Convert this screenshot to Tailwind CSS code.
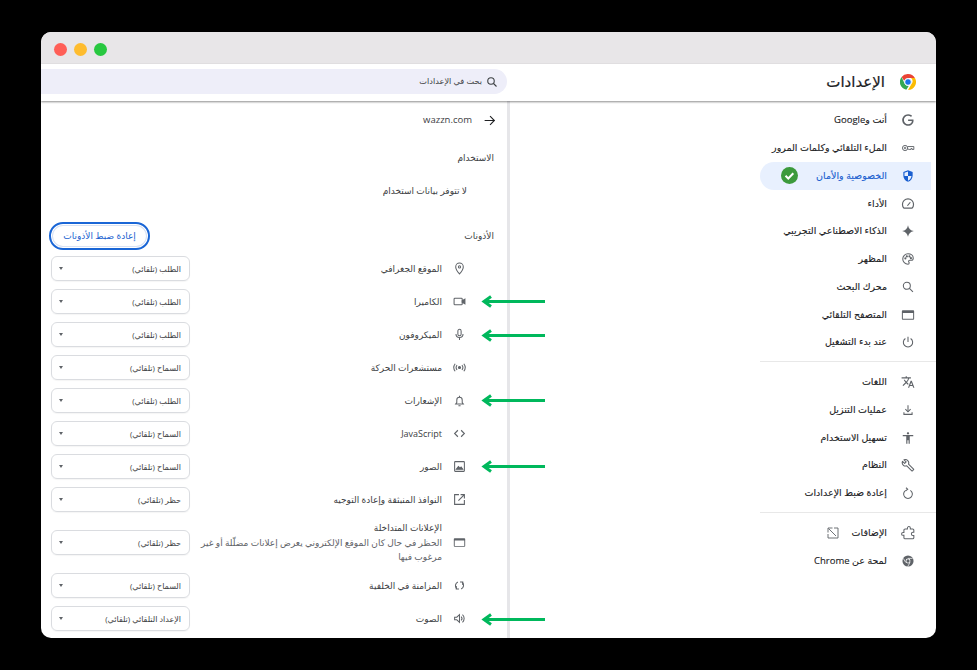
<!DOCTYPE html>
<html lang="ar" dir="rtl">
<head>
  <meta charset="UTF-8">
  <title>الإعدادات</title>
  <script src="https://cdn.jsdelivr.net/npm/@tailwindcss/browser@4"></script>
</head>
<body class="bg-black h-screen overflow-hidden font-['Open_Sans','DejaVu_Sans',sans-serif]">
  <!-- Window -->
  <div class="relative mt-[32px] mr-[41px] w-[895px] h-[606px] bg-white rounded-[10px] overflow-hidden flex flex-col">

    <!-- Title bar -->
    <div dir="ltr" class="h-[32px] shrink-0 bg-[#e8e6e8] flex items-center gap-[7px] pl-[13px] pt-[2px]">
      <span class="w-[13px] h-[13px] rounded-full bg-[#ff5f57]"></span>
      <span class="w-[13px] h-[13px] rounded-full bg-[#febc2e]"></span>
      <span class="w-[13px] h-[13px] rounded-full bg-[#28c840]"></span>
    </div>

    <!-- Toolbar -->
    <div class="relative z-10 h-[37px] shrink-0 bg-white flex items-center pb-[2px] shadow-[0_1px_2px_rgba(0,0,0,0.45)]">
      <div class="w-[429px] shrink-0 flex items-center gap-[15px] pr-[20px]">
        <svg class="w-[16px] h-[16px]" viewBox="0 0 24 24">
          <path fill="#ea4335" d="M12 0a12 12 0 0 1 10.4 6H12a6 6 0 0 0-5.7 4L2.4 4.5A12 12 0 0 1 12 0z"/>
          <path fill="#fbbc04" d="M22.4 6A12 12 0 0 1 12 24l5.2-9a6 6 0 0 0-.7-9z"/>
          <path fill="#34a853" d="M2.4 4.5 7.2 15a6 6 0 0 0 5.8 2.9L9.5 23.7A12 12 0 0 1 2.4 4.5z"/>
          <circle cx="12" cy="12" r="5" fill="#1a73e8" stroke="#fff" stroke-width="1.4"/>
        </svg>
        <h1 class="text-[15px] leading-none text-[#202124] font-medium [-webkit-text-stroke-width:0.2px]">الإعدادات</h1>
      </div>
      <div class="flex-1 h-[25px] bg-[#eeeef9] rounded-r-full flex items-center gap-[4px] pr-[9px] text-[8.2px] text-[#3c4043]">
        <svg class="w-[12px] h-[12px]" viewBox="0 0 24 24" fill="none" stroke="#3c4043" stroke-width="2.2"><circle cx="10" cy="10" r="6.5"/><path d="m15 15 6 6"/></svg>
        <span>بحث في الإعدادات</span>
      </div>
    </div>

    <!-- Body -->
    <div class="flex-1 flex min-h-0">

      <!-- Sidebar -->
      <aside class="w-[426px] shrink-0 pt-[5.5px] text-[9.5px] text-[#202124] [-webkit-text-stroke-width:0.12px]">
        <nav class="w-[176px]">
          <a class="h-[27.75px] flex items-center gap-[14px] pr-[21px]">
            <svg class="w-[14px] h-[14px] shrink-0" viewBox="0 0 24 24" fill="#5f6368"><path d="M21.35 11.1h-9.17v2.73h6.51c-.33 3.81-3.5 5.44-6.5 5.44C8.36 19.27 5 16.25 5 12c0-4.1 3.2-7.27 7.2-7.27 3.09 0 4.9 1.97 4.9 1.97L19 4.72S16.56 2 12.1 2C6.42 2 2.03 6.8 2.03 12c0 5.05 4.13 10 10.22 10 5.35 0 9.25-3.67 9.25-9.09 0-1.15-.15-1.81-.15-1.81z"/></svg>
            <span>أنت وGoogle</span>
          </a>
          <a class="h-[27.75px] flex items-center gap-[14px] pr-[21px]">
            <svg class="w-[14px] h-[14px] shrink-0" viewBox="0 0 24 24" fill="none" stroke="#5f6368" stroke-width="1.6"><circle cx="7" cy="12" r="4.5"/><circle cx="7" cy="12" r="1.4"/><path d="M11.5 9.5H22v5h-3v-1.5h-2v1.5h-3l-2.5-1"/></svg>
            <span>الملء التلقائي وكلمات المرور</span>
          </a>
          <a class="h-[27.75px] mr-[5px] w-[171px] bg-[#e8f0fe] rounded-l-full flex items-center gap-[14px] pr-[16px] text-[#1a5fd0]">
            <svg class="w-[14px] h-[14px] shrink-0" viewBox="0 0 24 24" fill="#1a5fd0"><path d="M12 2 4 5v6c0 5 3.4 9.6 8 11 4.6-1.400 8-6 8-11V5l-8-3zm0 2.200V12H6V6.400l6-2.200zM12 12h6c-.5 3.800-3 7.100-6 8v-8z"/></svg>
            <span class="flex-1">الخصوصية والأمان</span>
            <svg class="w-[17px] h-[17px] shrink-0 ml-[21px]" viewBox="0 0 17 17"><circle cx="8.500" cy="8.500" r="8.500" fill="#3c9a3c"/><path d="m4.500 8.700 2.800 2.800 5-5.200" fill="none" stroke="#fff" stroke-width="2"/></svg>
          </a>
          <a class="h-[27.75px] flex items-center gap-[14px] pr-[21px]">
            <svg class="w-[14px] h-[14px] shrink-0" viewBox="0 0 24 24" fill="none" stroke="#5f6368" stroke-width="2"><path d="M5 19a9.500 9.500 0 1 1 14 0z"/><path d="m11 15 5-6"/></svg>
            <span>الأداء</span>
          </a>
          <a class="h-[27.75px] flex items-center gap-[14px] pr-[21px]">
            <svg class="w-[14px] h-[14px] shrink-0" viewBox="0 0 24 24" fill="#5f6368"><path d="M12 2c.8 5.500 4.500 9.200 10 10-5.500.8-9.200 4.500-10 10-.8-5.500-4.500-9.200-10-10 5.500-.8 9.200-4.500 10-10z"/></svg>
            <span>الذكاء الاصطناعي التجريبي</span>
          </a>
          <a class="h-[27.75px] flex items-center gap-[14px] pr-[21px]">
            <svg class="w-[14px] h-[14px] shrink-0" viewBox="0 0 24 24" fill="none" stroke="#5f6368" stroke-width="1.800"><path d="M12 3a9 9 0 0 0 0 18c1.500 0 2-1 2-2 0-1.500-1-1.700-1-3 0-1 .8-2 2-2h2.500c2 0 3.500-1.500 3.500-3.500C21 6 17 3 12 3z"/><circle cx="7.500" cy="11" r=".9" fill="#5f6368"/><circle cx="10" cy="7.500" r=".9" fill="#5f6368"/><circle cx="14.500" cy="7.500" r=".9" fill="#5f6368"/><circle cx="17" cy="10.500" r=".9" fill="#5f6368"/></svg>
            <span>المظهر</span>
          </a>
          <a class="h-[27.75px] flex items-center gap-[14px] pr-[21px]">
            <svg class="w-[14px] h-[14px] shrink-0" viewBox="0 0 24 24" fill="none" stroke="#5f6368" stroke-width="1.800"><circle cx="10" cy="10" r="6"/><path d="m14.500 14.500 6 6"/></svg>
            <span>محرك البحث</span>
          </a>
          <a class="h-[27.75px] flex items-center gap-[14px] pr-[21px]">
            <svg class="w-[14px] h-[14px] shrink-0" viewBox="0 0 24 24" fill="#5f6368"><path d="M3 4h18a1.500 1.500 0 0 1 1.500 1.500v13A1.500 1.500 0 0 1 21 20H3a1.500 1.500 0 0 1-1.500-1.500v-13A1.500 1.500 0 0 1 3 4zm.200 4.500v9.800h17.600V8.500z"/></svg>
            <span>المتصفح التلقائي</span>
          </a>
          <a class="h-[27.75px] flex items-center gap-[14px] pr-[21px]">
            <svg class="w-[14px] h-[14px] shrink-0" viewBox="0 0 24 24" fill="none" stroke="#5f6368" stroke-width="1.800"><path d="M12 3v9"/><path d="M7.500 6a8 8 0 1 0 9 0"/></svg>
            <span>عند بدء التشغيل</span>
          </a>
          <div class="h-px bg-[#e8e8e8] mt-[5px] mb-[6px]"></div>
          <a class="h-[27.75px] flex items-center gap-[14px] pr-[21px]">
            <svg class="w-[14px] h-[14px] shrink-0" viewBox="0 0 24 24" fill="#5f6368"><path d="M12.870 15.070l-2.540-2.510.03-.03c1.740-1.940 2.980-4.170 3.710-6.530H17V4h-7V2H8v2H1v1.990h11.170C11.500 7.920 10.440 9.750 9 11.350 8.070 10.320 7.300 9.190 6.690 8h-2c.73 1.630 1.730 3.170 2.980 4.560l-5.090 5.020L4 19l5-5 3.110 3.110.76-2.040zM18.500 10h-2L12 22h2l1.120-3h4.750L21 22h2l-4.500-12zm-2.620 7l1.620-4.330L19.120 17h-3.240z"/></svg>
            <span>اللغات</span>
          </a>
          <a class="h-[27.75px] flex items-center gap-[14px] pr-[21px]">
            <svg class="w-[14px] h-[14px] shrink-0" viewBox="0 0 24 24" fill="none" stroke="#5f6368" stroke-width="1.800"><path d="M12 4v11"/><path d="m7.500 10.500 4.500 4.500 4.500-4.500"/><path d="M5 16v3.500h14V16"/></svg>
            <span>عمليات التنزيل</span>
          </a>
          <a class="h-[27.75px] flex items-center gap-[14px] pr-[21px]">
            <svg class="w-[14px] h-[14px] shrink-0" viewBox="0 0 24 24" fill="#5f6368"><path d="M12 2c1.100 0 2 .9 2 2s-.9 2-2 2-2-.9-2-2 .9-2 2-2zm9 7h-6v13h-2v-6h-2v6H9V9H3V7h18v2z"/></svg>
            <span>تسهيل الاستخدام</span>
          </a>
          <a class="h-[27.75px] flex items-center gap-[14px] pr-[21px]">
            <svg class="w-[14px] h-[14px] shrink-0" viewBox="0 0 24 24" fill="none" stroke="#5f6368" stroke-width="1.800" stroke-linejoin="round"><path d="M21.500 19l-8.600-8.600c.8-2 .4-4.400-1.300-6.100-1.800-1.800-4.400-2.100-6.500-1.200L8.800 6.800 6.300 9.300 2.600 5.600c-.9 2.100-.6 4.700 1.200 6.500 1.700 1.700 4.100 2.100 6.100 1.300l8.600 8.600c.3.3.8.300 1.100 0l1.900-1.900c.3-.3.3-.8 0-1.100z"/></svg>
            <span>النظام</span>
          </a>
          <a class="h-[27.75px] flex items-center gap-[14px] pr-[21px]">
            <svg class="w-[14px] h-[14px] shrink-0" viewBox="0 0 24 24" fill="none" stroke="#5f6368" stroke-width="1.800"><path d="M8 7.500a7.500 7.500 0 1 0 8 0"/><path d="m8.500 3 3 2.500-3.500 3"/></svg>
            <span>إعادة ضبط الإعدادات</span>
          </a>
          <div class="h-px bg-[#e8e8e8] mt-[5px] mb-[6px]"></div>
          <a class="h-[27.75px] flex items-center gap-[14px] pr-[21px]">
            <svg class="w-[14px] h-[14px] shrink-0 -scale-x-100" viewBox="0 0 24 24" fill="none" stroke="#5f6368" stroke-width="1.800"><path d="M20.500 11H19V7c0-1.100-.9-2-2-2h-4V3.500C13 2.120 11.880 1 10.500 1S8 2.120 8 3.500V5H4c-1.100 0-1.990.9-1.990 2v3.800H3.500c1.490 0 2.700 1.210 2.700 2.700s-1.210 2.700-2.700 2.700H2V20c0 1.100.9 2 2 2h13c1.100 0 2-.9 2-2v-4h1.500c1.380 0 2.500-1.120 2.500-2.500S21.880 11 20.500 11z"/></svg>
            <span>الإضافات</span>
            <svg class="w-[12px] h-[12px] shrink-0 -mr-[1px]" viewBox="0 0 24 24" fill="none" stroke="#5f6368" stroke-width="1.800"><path d="M14 2h8v20H2v-8"/><path d="M2 11V2h9M3 3l15 15"/></svg>
          </a>
          <a class="h-[27.75px] flex items-center gap-[14px] pr-[21px]">
            <svg class="w-[14px] h-[14px] shrink-0" viewBox="0 0 24 24"><circle cx="12" cy="12" r="9.500" fill="#5f6368"/><path d="M12 7.500h8M8 14.500 4 7.500M15.500 14.500l-4 7" stroke="#fff" stroke-width="1.200"/><circle cx="12" cy="12" r="4.200" fill="#fff"/><circle cx="12" cy="12" r="2.800" fill="#5f6368"/></svg>
            <span>لمحة عن Chrome</span>
          </a>
        </nav>
      </aside>

      <!-- Site details -->
      <main class="flex-1 min-w-0 border-r-[3px] border-[#e6e6e9] text-[9px] text-[#3c4043]">
        <div class="h-[38px] flex items-center gap-[11px] pr-[11px] text-[9.5px]">
          <svg class="w-[13px] h-[13px]" viewBox="0 0 24 24" fill="none" stroke="#202124" stroke-width="2"><path d="M3 12h18"/><path d="m13 4 8 8-8 8"/></svg>
          <span class="pt-[1px]">wazzn.com</span>
        </div>
        <h2 class="mt-[9px] h-[20px] flex items-center pr-[13px]">الاستخدام</h2>
        <p class="h-[45px] flex items-center pr-[40px]">لا تتوفر بيانات استخدام</p>
        <div class="mt-[8px] h-[29px] flex items-center justify-between pr-[13px] pl-[8px]">
          <h2 class="pt-[1px]">الأذونات</h2>
          <button class="w-[101px] h-[28px] rounded-full border-2 border-[#1a66d6] shadow-[inset_0_0_0_1px_#fff,inset_0_0_0_2px_#d8e2f4] text-[#1a5fd0] text-[9px]">إعادة ضبط الأذونات</button>
        </div>

        <div class="mt-[2px]">
          <div class="h-[33px] flex items-center pr-[41px] pl-[10px]">
            <svg class="w-[13px] h-[13px] shrink-0" viewBox="0 0 24 24" fill="none" stroke="#5f6368" stroke-width="1.900"><path d="M12 2a7 7 0 0 0-7 7c0 5 7 13 7 13s7-8 7-13a7 7 0 0 0-7-7z"/><circle cx="12" cy="9" r="2"/></svg>
            <span class="flex-1 mr-[11px] pt-[1px]">الموقع الجغرافي</span>
            <div class="w-[139px] h-[25px] shrink-0 rounded-[6px] border border-[#dadce0] flex items-center justify-between pr-[8px] pl-[7px] text-[8px] shadow-[0_1px_1px_rgba(0,0,0,0.04)]"><span>الطلب (تلقائي)</span><span class="border-x-[2.500px] border-x-transparent border-t-[3px] border-t-[#5f6368]"></span></div>
          </div>
          <div class="h-[33px] flex items-center pr-[41px] pl-[10px]">
            <svg class="w-[13px] h-[13px] shrink-0" viewBox="0 0 24 24" fill="none" stroke="#5f6368" stroke-width="1.900"><rect x="2" y="6" width="15" height="12" rx="1.500"/><path d="m17 10.500 5-3v9l-5-3z" fill="#5f6368"/></svg>
            <span class="flex-1 mr-[11px] pt-[1px]">الكاميرا</span>
            <div class="w-[139px] h-[25px] shrink-0 rounded-[6px] border border-[#dadce0] flex items-center justify-between pr-[8px] pl-[7px] text-[8px] shadow-[0_1px_1px_rgba(0,0,0,0.04)]"><span>الطلب (تلقائي)</span><span class="border-x-[2.500px] border-x-transparent border-t-[3px] border-t-[#5f6368]"></span></div>
          </div>
          <div class="h-[33px] flex items-center pr-[41px] pl-[10px]">
            <svg class="w-[13px] h-[13px] shrink-0" viewBox="0 0 24 24" fill="none" stroke="#5f6368" stroke-width="1.900"><rect x="9" y="2.500" width="6" height="12" rx="3"/><path d="M5.500 11a6.500 6.500 0 0 0 13 0M12 17.500V22"/></svg>
            <span class="flex-1 mr-[11px] pt-[1px]">الميكروفون</span>
            <div class="w-[139px] h-[25px] shrink-0 rounded-[6px] border border-[#dadce0] flex items-center justify-between pr-[8px] pl-[7px] text-[8px] shadow-[0_1px_1px_rgba(0,0,0,0.04)]"><span>الطلب (تلقائي)</span><span class="border-x-[2.500px] border-x-transparent border-t-[3px] border-t-[#5f6368]"></span></div>
          </div>
          <div class="h-[33px] flex items-center pr-[41px] pl-[10px]">
            <svg class="w-[13px] h-[13px] shrink-0" viewBox="0 0 24 24" fill="none" stroke="#5f6368" stroke-width="1.900"><circle cx="12" cy="12" r="2" fill="#5f6368"/><path d="M7.500 7.500c-2 2.500-2 6.500 0 9M16.500 7.500c2 2.500 2 6.500 0 9M4 5C1 9 1 15 4 19M20 5c3 4 3 10 0 14"/></svg>
            <span class="flex-1 mr-[11px] pt-[1px]">مستشعرات الحركة</span>
            <div class="w-[139px] h-[25px] shrink-0 rounded-[6px] border border-[#dadce0] flex items-center justify-between pr-[8px] pl-[7px] text-[8px] shadow-[0_1px_1px_rgba(0,0,0,0.04)]"><span>السماح (تلقائي)</span><span class="border-x-[2.500px] border-x-transparent border-t-[3px] border-t-[#5f6368]"></span></div>
          </div>
          <div class="h-[33px] flex items-center pr-[41px] pl-[10px]">
            <svg class="w-[13px] h-[13px] shrink-0" viewBox="0 0 24 24" fill="none" stroke="#5f6368" stroke-width="1.900"><path d="M5 18.500h14l-2-2.500v-5a5 5 0 0 0-10 0v5z"/><path d="M10 21.500h4M12 3v3"/></svg>
            <span class="flex-1 mr-[11px] pt-[1px]">الإشعارات</span>
            <div class="w-[139px] h-[25px] shrink-0 rounded-[6px] border border-[#dadce0] flex items-center justify-between pr-[8px] pl-[7px] text-[8px] shadow-[0_1px_1px_rgba(0,0,0,0.04)]"><span>الطلب (تلقائي)</span><span class="border-x-[2.500px] border-x-transparent border-t-[3px] border-t-[#5f6368]"></span></div>
          </div>
          <div class="h-[33px] flex items-center pr-[41px] pl-[10px]">
            <svg class="w-[13px] h-[13px] shrink-0" viewBox="0 0 24 24" fill="none" stroke="#5f6368" stroke-width="2"><path d="m9 6-6 6 6 6M15 6l6 6-6 6"/></svg>
            <span class="flex-1 mr-[11px] pt-[1px]">JavaScript</span>
            <div class="w-[139px] h-[25px] shrink-0 rounded-[6px] border border-[#dadce0] flex items-center justify-between pr-[8px] pl-[7px] text-[8px] shadow-[0_1px_1px_rgba(0,0,0,0.04)]"><span>السماح (تلقائي)</span><span class="border-x-[2.500px] border-x-transparent border-t-[3px] border-t-[#5f6368]"></span></div>
          </div>
          <div class="h-[33px] flex items-center pr-[41px] pl-[10px]">
            <svg class="w-[13px] h-[13px] shrink-0" viewBox="0 0 24 24" fill="none" stroke="#5f6368" stroke-width="1.900"><rect x="3" y="3" width="18" height="18" rx="1"/><path d="m6 17 4-5 3 3 2-2 3 4z" fill="#5f6368"/></svg>
            <span class="flex-1 mr-[11px] pt-[1px]">الصور</span>
            <div class="w-[139px] h-[25px] shrink-0 rounded-[6px] border border-[#dadce0] flex items-center justify-between pr-[8px] pl-[7px] text-[8px] shadow-[0_1px_1px_rgba(0,0,0,0.04)]"><span>السماح (تلقائي)</span><span class="border-x-[2.500px] border-x-transparent border-t-[3px] border-t-[#5f6368]"></span></div>
          </div>
          <div class="h-[33px] flex items-center pr-[41px] pl-[10px]">
            <svg class="w-[13px] h-[13px] shrink-0" viewBox="0 0 24 24" fill="none" stroke="#5f6368" stroke-width="2"><path d="M11 3H3v18h18v-8"/><path d="M14 3h7v7M21 3 10 14"/></svg>
            <span class="flex-1 mr-[11px] pt-[1px]">النوافذ المنبثقة وإعادة التوجيه</span>
            <div class="w-[139px] h-[25px] shrink-0 rounded-[6px] border border-[#dadce0] flex items-center justify-between pr-[8px] pl-[7px] text-[8px] shadow-[0_1px_1px_rgba(0,0,0,0.04)]"><span>حظر (تلقائي)</span><span class="border-x-[2.500px] border-x-transparent border-t-[3px] border-t-[#5f6368]"></span></div>
          </div>
          <div class="h-[53px] flex items-center pr-[41px] pl-[10px]">
            <svg class="w-[13px] h-[13px] shrink-0" viewBox="0 0 24 24" fill="#5f6368"><path d="M3 4h18a1.500 1.500 0 0 1 1.500 1.500v13A1.500 1.500 0 0 1 21 20H3a1.500 1.500 0 0 1-1.500-1.500v-13A1.500 1.500 0 0 1 3 4zm.200 4.500v9.800h17.600V8.500z"/></svg>
            <div class="flex-1 mr-[11px] ml-[8px] leading-[14.500px] pt-[1px]">
              <div>الإعلانات المتداخلة</div>
              <div class="text-[#5f6368]">الحظر في حال كان الموقع الإلكتروني يعرض إعلانات مضلّلة أو غير مرغوب فيها</div>
            </div>
            <div class="w-[139px] h-[25px] shrink-0 rounded-[6px] border border-[#dadce0] flex items-center justify-between pr-[8px] pl-[7px] text-[8px] shadow-[0_1px_1px_rgba(0,0,0,0.04)]"><span>حظر (تلقائي)</span><span class="border-x-[2.500px] border-x-transparent border-t-[3px] border-t-[#5f6368]"></span></div>
          </div>
          <div class="h-[33px] flex items-center pr-[41px] pl-[10px]">
            <svg class="w-[13px] h-[13px] shrink-0" viewBox="0 0 24 24" fill="none" stroke="#5f6368" stroke-width="2"><path d="M9 5.500a7.500 7.500 0 0 0-2 12.500M15 18.500a7.500 7.500 0 0 0 2-12.500"/><path d="M6 13v5.500h5M18 11V5.500h-5"/></svg>
            <span class="flex-1 mr-[11px] pt-[1px]">المزامنة في الخلفية</span>
            <div class="w-[139px] h-[25px] shrink-0 rounded-[6px] border border-[#dadce0] flex items-center justify-between pr-[8px] pl-[7px] text-[8px] shadow-[0_1px_1px_rgba(0,0,0,0.04)]"><span>السماح (تلقائي)</span><span class="border-x-[2.500px] border-x-transparent border-t-[3px] border-t-[#5f6368]"></span></div>
          </div>
          <div class="h-[33px] flex items-center pr-[41px] pl-[10px]">
            <svg class="w-[13px] h-[13px] shrink-0" viewBox="0 0 24 24" fill="none" stroke="#5f6368" stroke-width="1.900"><path d="M3 9.500v5h4l5 4.500v-14l-5 4.500z"/><path d="M15 8.500a5 5 0 0 1 0 7M17.500 5a9.500 9.500 0 0 1 0 14"/></svg>
            <span class="flex-1 mr-[11px] pt-[1px]">الصوت</span>
            <div class="w-[139px] h-[25px] shrink-0 rounded-[6px] border border-[#dadce0] flex items-center justify-between pr-[8px] pl-[7px] text-[8px] shadow-[0_1px_1px_rgba(0,0,0,0.04)]"><span>الإعداد التلقائي (تلقائي)</span><span class="border-x-[2.500px] border-x-transparent border-t-[3px] border-t-[#5f6368]"></span></div>
          </div>
        </div>
      </main>
    </div>

    <!-- Green annotation arrows -->
    <svg class="absolute left-[440px] top-[263px] w-[64px] h-[13px]" viewBox="0 0 64 13" fill="none" stroke="#00b85c" stroke-width="3"><path d="M64 6.500H3"/><path d="M10 1.500 3 6.500 10 11.500"/></svg>
    <svg class="absolute left-[440px] top-[297px] w-[64px] h-[13px]" viewBox="0 0 64 13" fill="none" stroke="#00b85c" stroke-width="3"><path d="M64 6.500H3"/><path d="M10 1.500 3 6.500 10 11.500"/></svg>
    <svg class="absolute left-[440px] top-[362px] w-[64px] h-[13px]" viewBox="0 0 64 13" fill="none" stroke="#00b85c" stroke-width="3"><path d="M64 6.500H3"/><path d="M10 1.500 3 6.500 10 11.500"/></svg>
    <svg class="absolute left-[440px] top-[428px] w-[64px] h-[13px]" viewBox="0 0 64 13" fill="none" stroke="#00b85c" stroke-width="3"><path d="M64 6.500H3"/><path d="M10 1.500 3 6.500 10 11.500"/></svg>
    <svg class="absolute left-[440px] top-[581px] w-[64px] h-[13px]" viewBox="0 0 64 13" fill="none" stroke="#00b85c" stroke-width="3"><path d="M64 6.500H3"/><path d="M10 1.500 3 6.500 10 11.500"/></svg>
  </div>
</body>
</html>
